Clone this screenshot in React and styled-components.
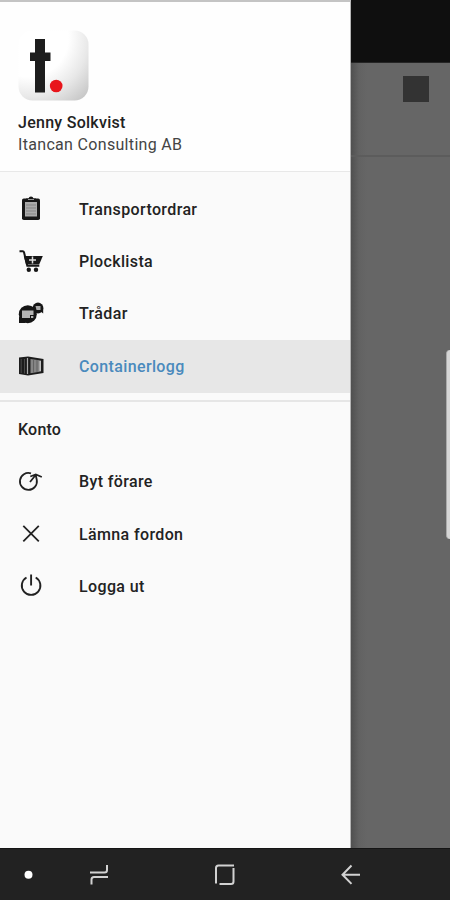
import React from 'react'
import styled, { createGlobalStyle } from 'styled-components'

const ClipboardIcon = () => (
  <Icon viewBox="0 0 26 26">
    <rect x="4" y="2.5" width="18" height="21.5" rx="1.8" fill="#161616" />
    <rect x="7" y="6" width="12" height="14.5" fill="#aaa" />
    <path d="M8 9h10M8 12h10M8 15h10M8 18h10" stroke="#858585" strokeWidth="1" />
    <path d="M8 2.5h2.5q.5-2 2.5-2t2.5 2H18v3H8z" fill="#161616" />
    <rect x="10" y="3" width="6" height="1" fill="#999" />
  </Icon>
)

const CartIcon = () => (
  <Icon viewBox="0 0 26 26">
    <path
      d="M1.5 2.3h3.2q1 0 1.3 1l3.3 13.5h12"
      fill="none"
      stroke="#161616"
      strokeWidth="2"
    />
    <path d="M5.8 7h19l-3.6 8.5H8z" fill="#161616" />
    <path d="M14.5 7.5v7M11 11h7" stroke="#ddd" strokeWidth="1.5" />
    <circle cx="10.8" cy="20.7" r="2.2" fill="#161616" />
    <circle cx="18" cy="20.7" r="2.2" fill="#161616" />
  </Icon>
)

const ChatIcon = () => (
  <Icon viewBox="0 0 26 26">
    <circle cx="20" cy="7" r="5.4" fill="#161616" />
    <path d="M22 10l3.2 2.6V7z" fill="#161616" />
    <path d="M17.5 5h5v4h-4z" fill="#aaa" />
    <circle cx="9.8" cy="13.2" r="9" fill="#161616" />
    <path d="M1 15.500v6.500h7z" fill="#161616" />
    <path d="M4 9.500h11.500v4.500H12v3H4z" fill="#b5b5b5" />
    <rect x="13" y="15" width="2.3" height="2" fill="#b5b5b5" />
  </Icon>
)

const ContainerIcon = () => (
  <Icon viewBox="0 0 26 26">
    <path d="M1 4.5 10 3.5 25.500 6v14l-15.500 2.500L1 21z" fill="#1c1c1c" />
    <path d="M3.2 6v14M6.500 6v14.5" stroke="#555" strokeWidth=".8" />
    <path d="M9.500 5v16" stroke="#aaa" strokeWidth="1.2" />
    <path d="M12.5 6l10.5 1.5v11l-10.5 1.7z" fill="#858585" />
    <path d="M15.5 6.5v13M19 7v12" stroke="#555" strokeWidth=".7" />
    <path d="M22.200 8v10" stroke="#c5c5c5" strokeWidth="1.5" />
  </Icon>
)

const SwitchIcon = () => (
  <Icon viewBox="0 0 26 26">
    <path
      d="M13 4.3A8.500 8.500 0 1 0 18.8 11L17.700 6M12 13l5.700-7M12.300 7.500l5.500-2 6 2.500"
      fill="none"
      stroke="#222"
      strokeWidth="1.8"
    />
  </Icon>
)

const CloseIcon = () => (
  <Icon viewBox="0 0 26 26">
    <path d="M5.3 4.8l15.500 15.500M20.800 4.8L5.300 20.300" stroke="#222" strokeWidth="1.8" />
  </Icon>
)

const PowerIcon = () => (
  <Icon viewBox="0 0 26 26">
    <path
      d="M8.500 4.500a9.300 9.300 0 1 0 9.200 0M13.100 1.500v11"
      fill="none"
      stroke="#222"
      strokeWidth="1.9"
    />
  </Icon>
)

const Logo = () => (
  <svg width="72" height="72" viewBox="0 0 72 72">
    <defs>
      <radialGradient id="tile" cx="0.15" cy="0.1" r="1.25">
        <stop offset="0.45" stopColor="#fff" />
        <stop offset="0.68" stopColor="#e8e8e8" />
        <stop offset="1" stopColor="#bdbdbd" />
      </radialGradient>
    </defs>
    <rect x="0.5" y="0.5" width="70" height="70" rx="14" fill="url(#tile)" />
    <rect x="17" y="9" width="10" height="53.5" fill="#1d1d1d" />
    <rect x="12" y="22.5" width="20.5" height="8.5" fill="#1d1d1d" />
    <circle cx="38.2" cy="56" r="6.3" fill="#e8151b" />
  </svg>
)

const menuItems = [
  { label: 'Transportordrar', icon: <ClipboardIcon /> },
  { label: 'Plocklista', icon: <CartIcon /> },
  { label: 'Trådar', icon: <ChatIcon /> },
  { label: 'Containerlogg', icon: <ContainerIcon />, active: true },
]

const accountItems = [
  { label: 'Byt förare', icon: <SwitchIcon /> },
  { label: 'Lämna fordon', icon: <CloseIcon /> },
  { label: 'Logga ut', icon: <PowerIcon /> },
]

const MenuList = ({ items }) => (
  <List>
    {items.map(({ label, icon, active }) => (
      <MenuItem key={label} $active={active}>
        {icon}
        <span>{label}</span>
      </MenuItem>
    ))}
  </List>
)

const App = () => (
  <>
    <GlobalStyle />
    <Screen>
      <Main>
        <Drawer>
          <Profile>
            <Logo />
            <Name>Jenny Solkvist</Name>
            <Company>Itancan Consulting AB</Company>
          </Profile>
          <MenuList items={menuItems} />
          <Account>
            <Heading>Konto</Heading>
            <MenuList items={accountItems} />
          </Account>
        </Drawer>
        <Backdrop>
          <StatusBar />
          <Toolbar>
            <ToolbarButton />
          </Toolbar>
          <EdgeHandle />
        </Backdrop>
      </Main>
      <NavBar>
        <svg width="450" height="51" viewBox="0 0 450 51" fill="none">
          <circle cx="28.5" cy="25.7" r="4" fill="#fff" />
          <g stroke="#d2d2d2" strokeWidth="2">
            <path d="M90 23.5h14.5q2.5 0 2.5-2.5V16M108 28H94q-2.5 0-2.5 2.5V35.500" />
            <path d="M216 34.5V19q0-2.5 2.5-2.5H234M233.500 19v13.500q0 2.5-2.5 2.5H219.500" />
            <path d="M351.500 16.5l-9 9.200 9 9.200M343 25.700H360" />
          </g>
        </svg>
      </NavBar>
    </Screen>
  </>
)

const GlobalStyle = createGlobalStyle`
  * {
    box-sizing: border-box;
  }
  body {
    margin: 0;
    font-family: Roboto, 'Liberation Sans', sans-serif;
  }
`

const Screen = styled.div`
  display: flex;
  flex-direction: column;
  width: 450px;
  height: 900px;
  overflow: hidden;
  background: #222;
`

const Main = styled.div`
  display: flex;
  height: 848px;
`

const Drawer = styled.aside`
  width: 351px;
  background: #fafafa;
  border-top: 2px solid #c4c4c4;
  border-right: 1px solid #b5b5b5;
`

const Profile = styled.header`
  display: flex;
  flex-direction: column;
  height: 170px;
  padding: 27.5px 18px 0;
  margin-bottom: 11px;
  background: #fefefe;
  border-bottom: 1px solid #e8e8e8;
`

const Name = styled.div`
  margin-top: 10px;
  font-size: 16px;
  font-weight: 500;
  line-height: 22px;
  letter-spacing: 0.27px;
  color: #222;
`

const Company = styled.div`
  font-size: 16px;
  line-height: 22px;
  letter-spacing: 0.32px;
  color: #444;
`

const List = styled.ul`
  margin: 0;
  padding: 0;
  list-style: none;
`

const MenuItem = styled.li`
  display: flex;
  align-items: center;
  gap: 35px;
  height: 52.4px;
  padding-left: 18px;
  font-size: 16px;
  font-weight: 500;
  letter-spacing: 0.37px;
  color: ${props => (props.$active ? '#4a8abd' : '#222')};
  background: ${props => (props.$active ? '#e7e7e7' : 'transparent')};
`

const Icon = styled.svg`
  flex: none;
  width: 26px;
  height: 26px;
`

const Account = styled.section`
  margin-top: 7.4px;
  border-top: 2px solid #e6e6e6;
`

const Heading = styled.h2`
  margin: 0;
  padding: 17px 18px 0;
  height: 53.5px;
  font-size: 16px;
  font-weight: 500;
  line-height: 22px;
  letter-spacing: 0.2px;
  color: #222;
`

const Backdrop = styled.div`
  position: relative;
  flex: 1;
  background: linear-gradient(90deg, #505050, #626262 8px, #666 16px);
`

const StatusBar = styled.div`
  height: 63px;
  background: #0f0f0f;
  border-bottom: 1px solid #252525;
`

const Toolbar = styled.div`
  display: flex;
  justify-content: flex-end;
  height: 94px;
  padding: 13px 21.5px 0 0;
  border-bottom: 2px solid #5c5c5c;
`

const ToolbarButton = styled.div`
  width: 26px;
  height: 26px;
  background: #333;
`

/* sits on top of the dimmed page, at the right edge */
const EdgeHandle = styled.div`
  position: absolute;
  top: 350px;
  right: 0;
  width: 4px;
  height: 189px;
  border-left: 1px solid #aaa;
  border-radius: 4px 0 0 4px;
  background: #d6d6d6;
`

const NavBar = styled.nav`
  height: 52px;
  background: #222;
  border-top: 1px solid #151515;
`

export default App
